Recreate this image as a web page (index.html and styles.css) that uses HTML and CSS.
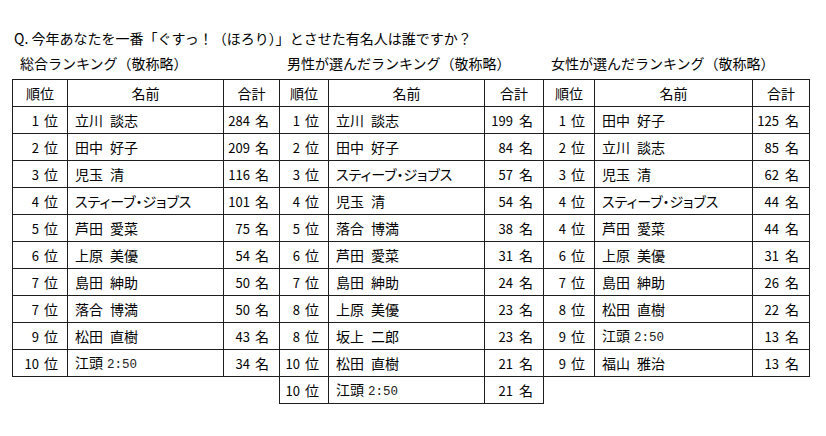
FILE: index.html
```html
<!DOCTYPE html>
<html lang="ja">
<head>
<meta charset="utf-8">
<link rel="stylesheet" href="styles.css">
</head>
<body>
<div class="page">
  <p class="question">Q. 今年あなたを一番「ぐすっ！（ほろり）」とさせた有名人は誰ですか？</p>
  <div class="tables">
    <section class="col c1">
      <h2 class="title">総合ランキング（敬称略）</h2>
      <table class="rank">
        <colgroup><col class="w-rank"><col class="w-name"><col class="w-sum"></colgroup>
        <thead><tr><th>順位</th><th>名前</th><th>合計</th></tr></thead>
        <tbody>
          <tr><td class="r"><span class="d">1</span><span class="u">位</span></td><td class="n">立川&ensp;談志</td><td class="s"><span class="d">284</span><span class="u">名</span></td></tr>
          <tr><td class="r"><span class="d">2</span><span class="u">位</span></td><td class="n">田中&ensp;好子</td><td class="s"><span class="d">209</span><span class="u">名</span></td></tr>
          <tr><td class="r"><span class="d">3</span><span class="u">位</span></td><td class="n">児玉&ensp;清</td><td class="s"><span class="d">116</span><span class="u">名</span></td></tr>
          <tr><td class="r"><span class="d">4</span><span class="u">位</span></td><td class="n">スティーブ・ジョブス</td><td class="s"><span class="d">101</span><span class="u">名</span></td></tr>
          <tr><td class="r"><span class="d">5</span><span class="u">位</span></td><td class="n">芦田&ensp;愛菜</td><td class="s"><span class="d">75</span><span class="u">名</span></td></tr>
          <tr><td class="r"><span class="d">6</span><span class="u">位</span></td><td class="n">上原&ensp;美優</td><td class="s"><span class="d">54</span><span class="u">名</span></td></tr>
          <tr><td class="r"><span class="d">7</span><span class="u">位</span></td><td class="n">島田&ensp;紳助</td><td class="s"><span class="d">50</span><span class="u">名</span></td></tr>
          <tr><td class="r"><span class="d">7</span><span class="u">位</span></td><td class="n">落合&ensp;博満</td><td class="s"><span class="d">50</span><span class="u">名</span></td></tr>
          <tr><td class="r"><span class="d">9</span><span class="u">位</span></td><td class="n">松田&ensp;直樹</td><td class="s"><span class="d">43</span><span class="u">名</span></td></tr>
          <tr><td class="r"><span class="d">10</span><span class="u">位</span></td><td class="n">江頭<span class="mono">2:50</span></td><td class="s"><span class="d">34</span><span class="u">名</span></td></tr>
        </tbody>
      </table>
    </section>
    <section class="col c2">
      <h2 class="title">男性が選んだランキング（敬称略）</h2>
      <table class="rank">
        <colgroup><col class="w-rank"><col class="w-name"><col class="w-sum"></colgroup>
        <thead><tr><th>順位</th><th>名前</th><th>合計</th></tr></thead>
        <tbody>
          <tr><td class="r"><span class="d">1</span><span class="u">位</span></td><td class="n">立川&ensp;談志</td><td class="s"><span class="d">199</span><span class="u w">名</span></td></tr>
          <tr><td class="r"><span class="d">2</span><span class="u">位</span></td><td class="n">田中&ensp;好子</td><td class="s"><span class="d">84</span><span class="u w">名</span></td></tr>
          <tr><td class="r"><span class="d">3</span><span class="u">位</span></td><td class="n">スティーブ・ジョブス</td><td class="s"><span class="d">57</span><span class="u w">名</span></td></tr>
          <tr><td class="r"><span class="d">4</span><span class="u">位</span></td><td class="n">児玉&ensp;清</td><td class="s"><span class="d">54</span><span class="u w">名</span></td></tr>
          <tr><td class="r"><span class="d">5</span><span class="u">位</span></td><td class="n">落合&ensp;博満</td><td class="s"><span class="d">38</span><span class="u w">名</span></td></tr>
          <tr><td class="r"><span class="d">6</span><span class="u">位</span></td><td class="n">芦田&ensp;愛菜</td><td class="s"><span class="d">31</span><span class="u w">名</span></td></tr>
          <tr><td class="r"><span class="d">7</span><span class="u">位</span></td><td class="n">島田&ensp;紳助</td><td class="s"><span class="d">24</span><span class="u w">名</span></td></tr>
          <tr><td class="r"><span class="d">8</span><span class="u">位</span></td><td class="n">上原&ensp;美優</td><td class="s"><span class="d">23</span><span class="u w">名</span></td></tr>
          <tr><td class="r"><span class="d">8</span><span class="u">位</span></td><td class="n">坂上&ensp;二郎</td><td class="s"><span class="d">23</span><span class="u w">名</span></td></tr>
          <tr><td class="r"><span class="d">10</span><span class="u">位</span></td><td class="n">松田&ensp;直樹</td><td class="s"><span class="d">21</span><span class="u w">名</span></td></tr>
          <tr><td class="r"><span class="d">10</span><span class="u">位</span></td><td class="n">江頭<span class="mono">2:50</span></td><td class="s"><span class="d">21</span><span class="u w">名</span></td></tr>
        </tbody>
      </table>
    </section>
    <section class="col c3">
      <h2 class="title">女性が選んだランキング（敬称略）</h2>
      <table class="rank">
        <colgroup><col class="w-rank"><col class="w-name"><col class="w-sum"></colgroup>
        <thead><tr><th>順位</th><th>名前</th><th>合計</th></tr></thead>
        <tbody>
          <tr><td class="r"><span class="d">1</span><span class="u">位</span></td><td class="n">田中&ensp;好子</td><td class="s"><span class="d">125</span><span class="u w">名</span></td></tr>
          <tr><td class="r"><span class="d">2</span><span class="u">位</span></td><td class="n">立川&ensp;談志</td><td class="s"><span class="d">85</span><span class="u w">名</span></td></tr>
          <tr><td class="r"><span class="d">3</span><span class="u">位</span></td><td class="n">児玉&ensp;清</td><td class="s"><span class="d">62</span><span class="u w">名</span></td></tr>
          <tr><td class="r"><span class="d">4</span><span class="u">位</span></td><td class="n">スティーブ・ジョブス</td><td class="s"><span class="d">44</span><span class="u w">名</span></td></tr>
          <tr><td class="r"><span class="d">4</span><span class="u">位</span></td><td class="n">芦田&ensp;愛菜</td><td class="s"><span class="d">44</span><span class="u w">名</span></td></tr>
          <tr><td class="r"><span class="d">6</span><span class="u">位</span></td><td class="n">上原&ensp;美優</td><td class="s"><span class="d">31</span><span class="u w">名</span></td></tr>
          <tr><td class="r"><span class="d">7</span><span class="u">位</span></td><td class="n">島田&ensp;紳助</td><td class="s"><span class="d">26</span><span class="u w">名</span></td></tr>
          <tr><td class="r"><span class="d">8</span><span class="u">位</span></td><td class="n">松田&ensp;直樹</td><td class="s"><span class="d">22</span><span class="u w">名</span></td></tr>
          <tr><td class="r"><span class="d">9</span><span class="u">位</span></td><td class="n">江頭<span class="mono">2:50</span></td><td class="s"><span class="d">13</span><span class="u w">名</span></td></tr>
          <tr><td class="r"><span class="d">9</span><span class="u">位</span></td><td class="n">福山&ensp;雅治</td><td class="s"><span class="d">13</span><span class="u w">名</span></td></tr>
        </tbody>
      </table>
    </section>
  </div>
</div>
</body>
</html>
```

FILE: styles.css
```css
html, body {
  margin: 0;
  padding: 0;
  background: #ffffff;
}

body {
  font-family: "Noto Sans CJK JP", "Noto Sans", sans-serif;
  color: #000000;
  font-size: 14px;
}

.page {
  padding: 28px 0 0 12px;
}

.question {
  margin: 0 0 5px 2px;
  font-size: 14px;
  line-height: 20px;
  font-weight: normal;
}

.tables {
  display: flex;
  align-items: flex-start;
}

.col + .col {
  margin-left: -1px;
}

.title {
  margin: 0 0 6px 8px;
  font-size: 14px;
  line-height: 20px;
  font-weight: normal;
  white-space: nowrap;
}

.rank {
  border-collapse: collapse;
  table-layout: fixed;
}

.rank th,
.rank td {
  border: 1px solid #1e1e1e;
  height: 26px;
  padding: 0;
  font-size: 14px;
  line-height: 16px;
  font-weight: normal;
  white-space: nowrap;
  vertical-align: middle;
}

.rank th {
  text-align: center;
}

.rank td.r {
  text-align: right;
  padding-right: 9px;
}

.rank td.n {
  text-align: left;
  padding-left: 7px;
  font-feature-settings: "palt" 1;
}

.rank td.s {
  text-align: right;
  padding-right: 10px;
}

.d {
  font-size: 13px;
}

.u {
  margin-left: 5px;
}

.u.w {
  margin-left: 6px;
}

.mono {
  font-family: "Liberation Mono", monospace;
  font-size: 12.5px;
  margin-left: 4px;
  color: #222222;
}

.c1 .w-rank { width: 55px; }
.c1 .w-name { width: 156px; }
.c1 .w-sum { width: 56px; }

.c2 .w-rank { width: 49px; }
.c2 .w-name { width: 156px; }
.c2 .w-sum { width: 59px; }

.c3 .w-rank { width: 51px; }
.c3 .w-name { width: 158px; }
.c3 .w-sum { width: 57px; }
```
